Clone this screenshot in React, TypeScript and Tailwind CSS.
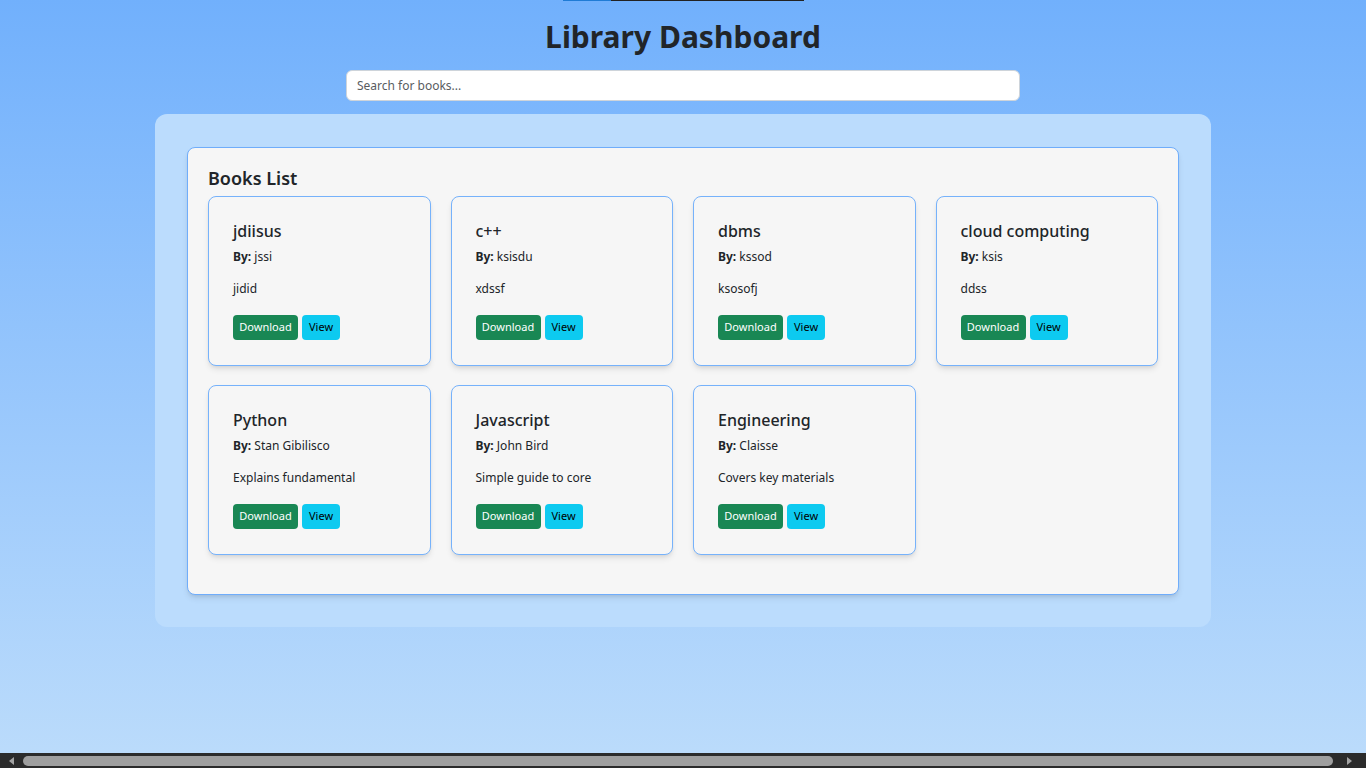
import React from "react";

type Book = {
  id: number;
  title: string;
  author: string;
  description: string;
};

const books: Book[] = [
  { id: 1, title: "jdiisus", author: "jssi", description: "jidid" },
  { id: 2, title: "c++", author: "ksisdu", description: "xdssf" },
  { id: 3, title: "dbms", author: "kssod", description: "ksosofj" },
  { id: 4, title: "cloud computing", author: "ksis", description: "ddss" },
  { id: 5, title: "Python", author: "Stan Gibilisco", description: "Explains fundamental" },
  { id: 6, title: "Javascript", author: "John Bird", description: "Simple guide to core" },
  { id: 7, title: "Engineering", author: "Claisse", description: "Covers key materials" },
];

const font = { fontFamily: '"Segoe UI", "Noto Sans", "Open Sans", sans-serif' };

const BookCard = ({ book }: { book: Book }) => (
  <div className="h-[170px] rounded-lg border border-[#76b2fb] bg-[#f6f6f6] px-6 pt-[23px] shadow-md">
    {/* Book info */}
    <h3 className="text-[16px] font-medium leading-[22px] text-[#212529]">{book.title}</h3>
    <p className="mt-[5px] text-[12px] leading-5 text-[#212529]">
      <span className="font-bold">By:</span> {book.author}
    </p>
    <p className="mt-3 text-[12px] leading-5 text-[#212529]">{book.description}</p>

    {/* Actions */}
    <div className="mt-4 flex gap-1">
      <button className="h-[25px] w-[65px] rounded-[4px] bg-[#198754] text-[11px] text-white">
        Download
      </button>
      <button className="h-[25px] w-[38px] rounded-[4px] bg-[#0dcaf0] text-[11px] text-black">
        View
      </button>
    </div>
  </div>
);

// browser's horizontal scrollbar, as seen in the screenshot
const ScrollBar = () => (
  <div className="fixed inset-x-0 bottom-0 flex h-[15px] items-center bg-[#2b2b2b]">
    <div className="flex w-[23px] justify-center">
      <div className="h-0 w-0 border-y-[4px] border-r-[5px] border-y-transparent border-r-[#a3a3a3]" />
    </div>
    <div className="h-[10px] w-[1310px] rounded-full bg-[#9f9f9f]" />
    <div className="flex flex-1 justify-center">
      <div className="h-0 w-0 border-y-[4px] border-l-[5px] border-y-transparent border-l-[#a3a3a3]" />
    </div>
  </div>
);

const App = () => {
  return (
    <div className="min-h-screen bg-gradient-to-b from-[#71b0fc] to-[#bcdcfb]" style={font}>
      {/* Top strip */}
      <div className="flex h-px justify-center">
        <div className="w-[48px] bg-[#1f7bd5]" />
        <div className="w-[193px] bg-[#222222]" />
      </div>

      <h1 className="mt-[14px] text-center text-[30px] font-bold leading-[44px] text-[#212529]">
        Library Dashboard
      </h1>

      <div className="mt-[11px] flex justify-center">
        <input
          type="text"
          placeholder="Search for books..."
          className="h-[31px] w-[674px] rounded-md border border-[#ced4da] bg-white px-[10px] text-[12px] text-[#212529] placeholder:text-[#595c5f] outline-none"
        />
      </div>

      {/* Main panel */}
      <div className="mx-auto mt-[13px] w-[1056px] rounded-xl bg-[#bbdcfd] px-8 pb-8 pt-[33px]">
        <div className="rounded-lg border border-[#6fadfb] bg-[#f6f6f6] p-5 shadow-md">
          <h2 className="mb-2 text-[18px] font-semibold leading-5 text-[#212529]">Books List</h2>
          <div className="mb-[19px] grid grid-cols-4 gap-x-5 gap-y-[19px]">
            {books.map((book) => (
              <BookCard key={book.id} book={book} />
            ))}
          </div>
        </div>
      </div>

      <ScrollBar />
    </div>
  );
};

export default App;
